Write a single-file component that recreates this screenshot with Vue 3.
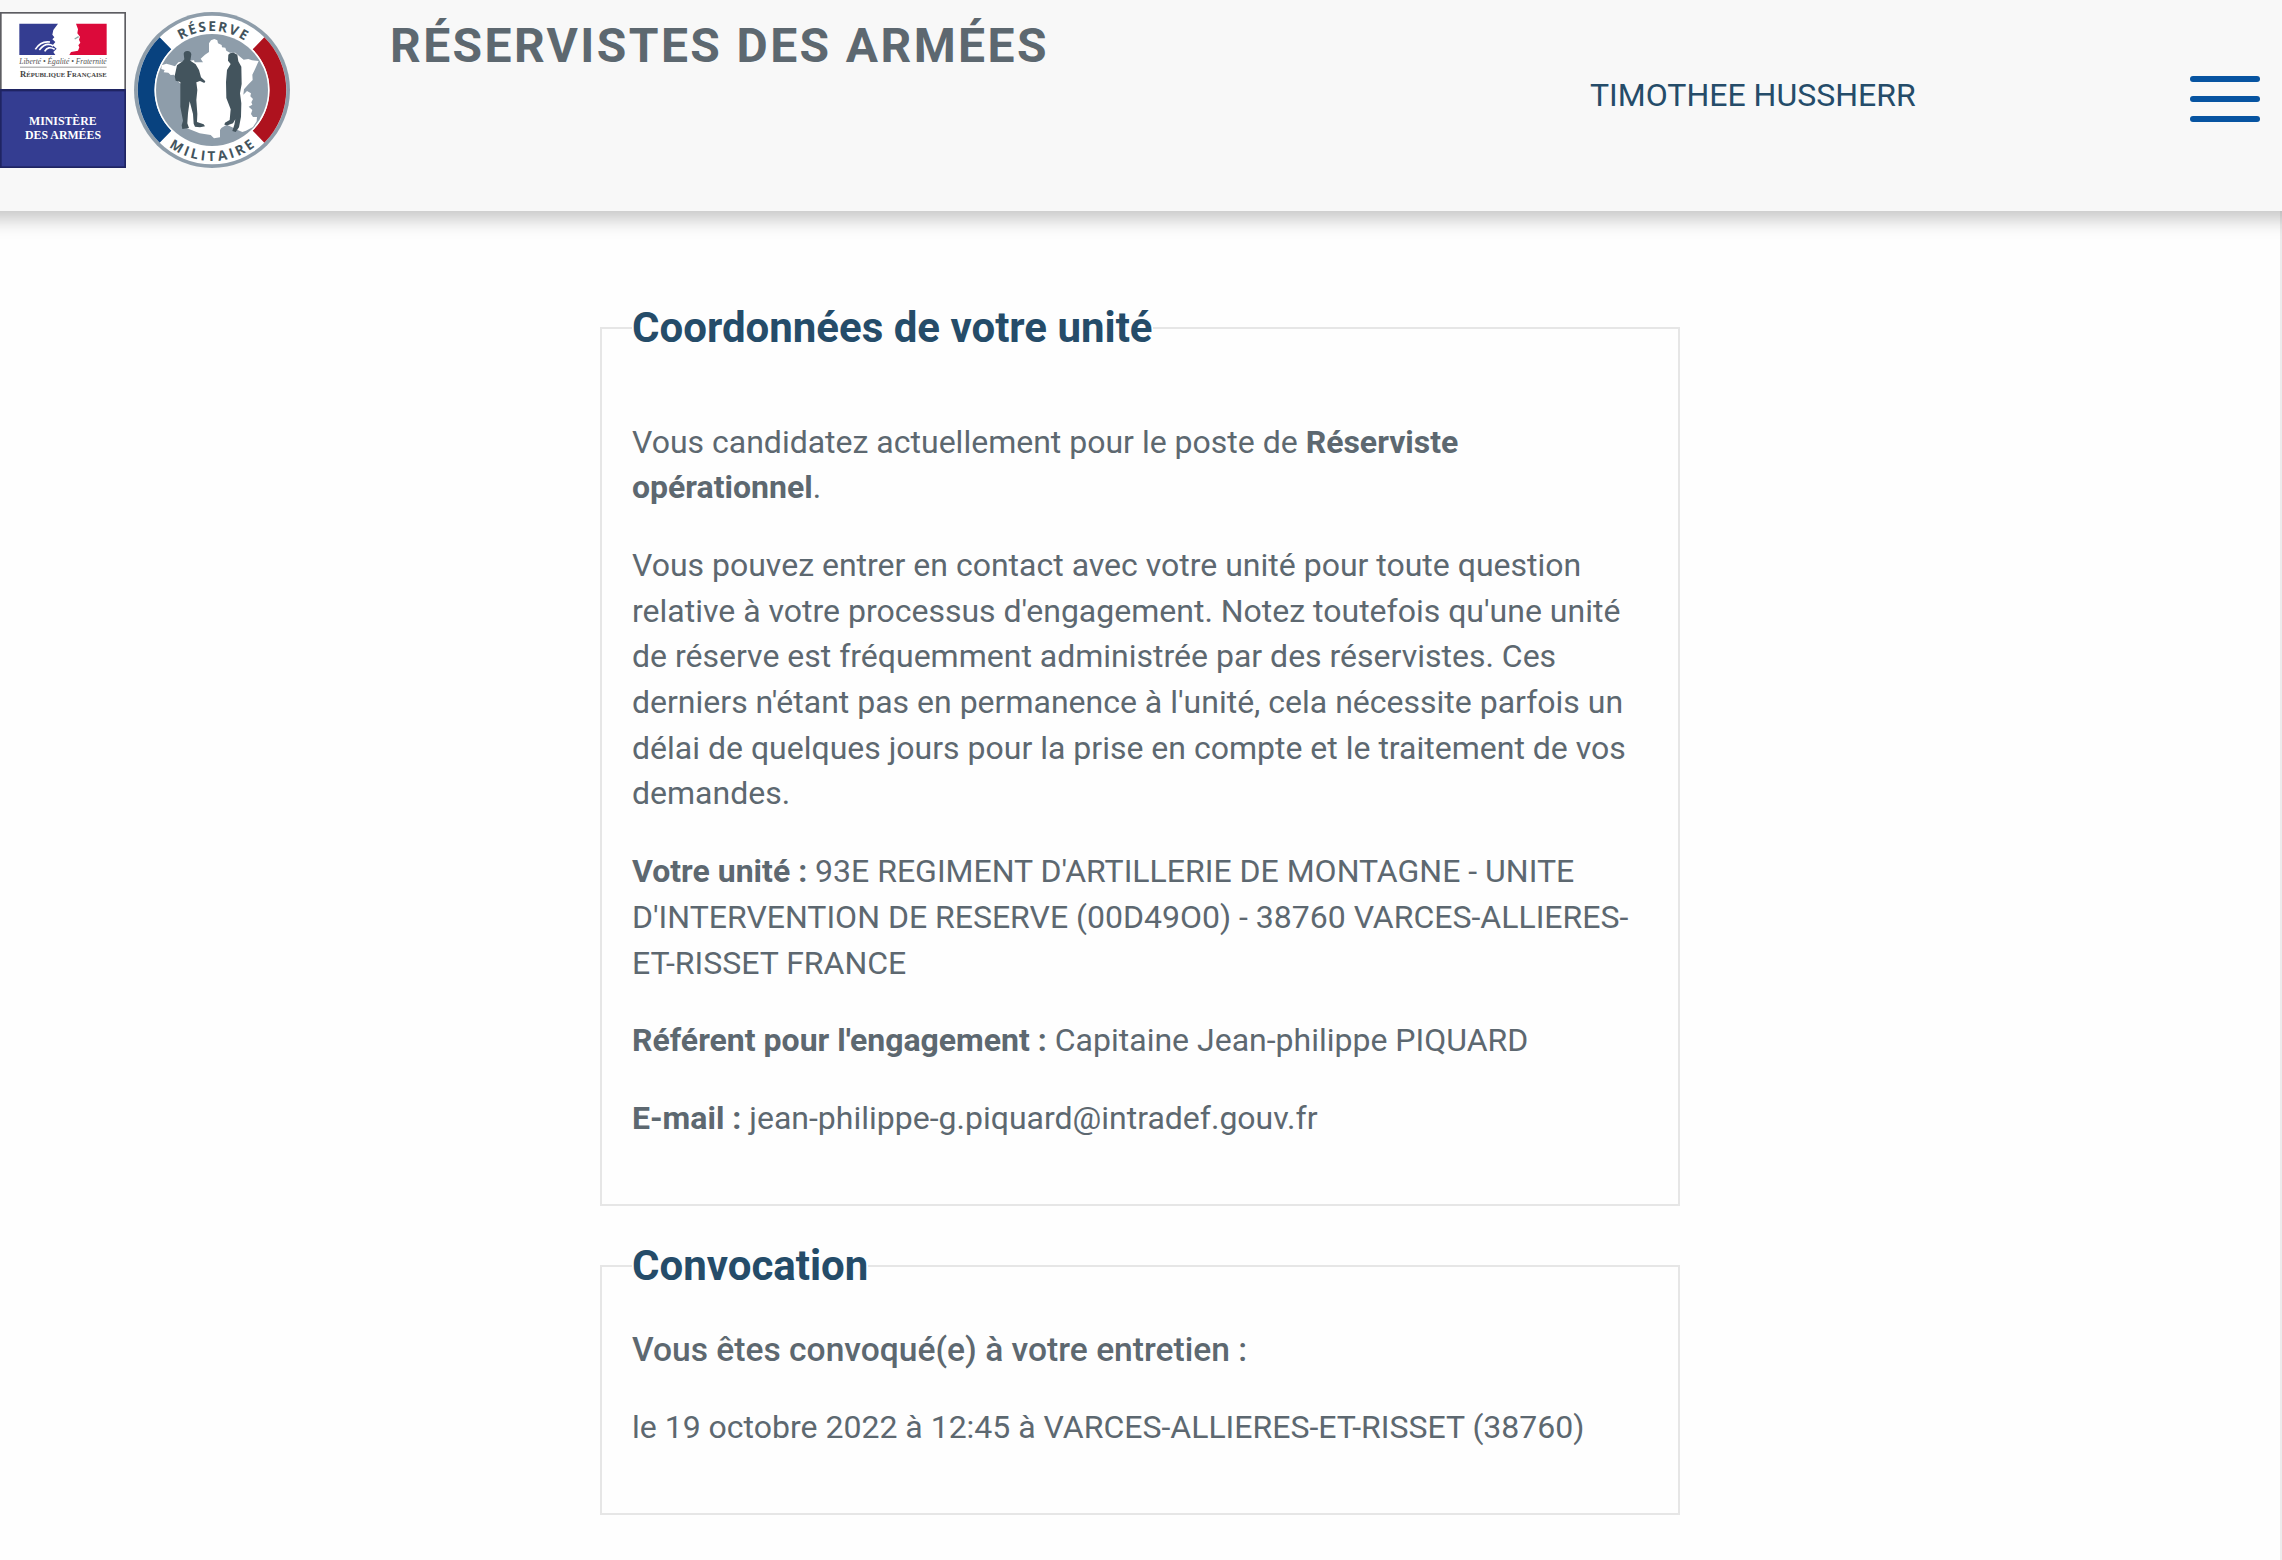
<script setup>
const user = 'TIMOTHEE HUSSHERR'
</script>

<template>
  <div class="page">
    <header class="topbar">
      <div class="logos">
        <svg class="ministry" viewBox="0 36 378 468" role="img" aria-label="Ministère des Armées">
          <rect x="0" y="36" width="378" height="468" fill="#5d5d62" />
          <rect x="5" y="41" width="368" height="226" fill="#fff" />
          <rect x="0" y="267" width="378" height="237" fill="#1f2462" />
          <rect x="5" y="274" width="368" height="225" fill="#343d91" />
          <path fill="#343d91" d="M58 71H174L160 90 157 104 163 112 157 118 166 126 158 136 170 146 160 156 166 165H58Z" />
          <path fill="#dc0a3a" d="M228 71H320V165H208L213 156 234 152 238 142 235 136 241 128 237 119 240 110 232 100 234 88Z" />
          <path fill="none" stroke="#fff" stroke-width="5" d="M106 148Q122 122 150 126M118 150Q138 124 160 138M134 154Q144 136 164 148" />
          <path fill="none" stroke="#8fa7a7" stroke-width="4" d="M224 117L236 110" />
          <text class="motto" x="58" y="191" textLength="262" lengthAdjust="spacingAndGlyphs">Liberté • Égalité • Fraternité</text>
          <rect x="60" y="200" width="260" height="3" fill="#999" />
          <text class="republic" x="60" y="230" textLength="260" lengthAdjust="spacingAndGlyphs"><tspan class="initial">R</tspan>ÉPUBLIQUE <tspan class="initial">F</tspan>RANÇAISE</text>
          <text class="dept" x="87" y="376" textLength="203" lengthAdjust="spacingAndGlyphs">MINISTÈRE</text>
          <text class="dept" x="75" y="418" textLength="228" lengthAdjust="spacingAndGlyphs">DES ARMÉES</text>
        </svg>
        <svg class="emblem" viewBox="27 36 468 468" role="img" aria-label="Réserve militaire">
          <defs>
            <path id="arc-top" d="M84 270A177 177 0 0 1 438 270" />
            <path id="arc-bottom" d="M48 270A213 213 0 0 0 474 270" />
          </defs>
          <circle cx="261" cy="270" r="234" fill="#8e9daa" />
          <circle cx="261" cy="270" r="223" fill="#fff" />
          <path fill="#08427f" d="M104 112A223 223 0 0 0 104 428L139 392A172 172 0 0 1 139 148Z" />
          <path fill="#ae121e" d="M418 112A223 223 0 0 1 418 428L383 392A172 172 0 0 0 383 148Z" />
          <circle cx="261" cy="270" r="172" fill="#fff" />
          <circle cx="261" cy="270" r="168" fill="#8e9daa" />
          <path fill="#fff" d="M268 117L277 121 279 130 290 135 291 142 301 143 304 152 315 158 331 158 345 170 356 179 370 177 381 181 401 183 390 208 382 224 383 240 371 252 357 268 355 284 366 273 378 280 376 289 384 297 379 307 382 314 371 320 382 330 378 342 384 351 396 351 395 364 384 381 363 392 352 396 338 390 320 381 305 374 289 384 285 390 285 412 267 415 257 405 238 402 224 400 190 386 177 380 182 330 178 290 180 262 160 245 147 224 137 225 130 218 116 217 119 210 109 207 110 196 124 191 138 195 150 199 160 187 190 182 207 181 209 187 234 187 227 176 240 164 252 156 252 130 258 121Z" />
          <path fill="#43545d" d="M176 161Q178 152 188 153 198 154 199 163L196 182 212 193 222 210 228 232 241 244 238 249 225 243 214 247 217 270 214 300 217 342 216 366 236 373 240 379 225 382 210 380 206 371 204 342 194 304 189 340 187 370 192 384 172 387 170 376 174 362 166 320 166 246 152 242 149 228 156 196 173 184 178 178Z" />
          <path fill="#43545d" d="M310 164Q314 157 326 158L337 164 340 184 349 200 350 252 345 280 349 310 348 350 342 382 332 396 322 393 328 374 331 358 324 370 308 376 298 374 300 368 314 360 317 328 304 294 303 246 306 210 317 192 309 182Z" />
          <text class="ring" letter-spacing="5"><textPath href="#arc-top" startOffset="50.8%" text-anchor="middle">RÉSERVE</textPath></text>
          <text class="ring" letter-spacing="9"><textPath href="#arc-bottom" startOffset="50.7%" text-anchor="middle">MILITAIRE</textPath></text>
        </svg>
      </div>
      <h1 class="title">RÉSERVISTES DES ARMÉES</h1>
      <a class="user">{{ user }}</a>
      <button class="menu" type="button" aria-label="Menu"><span /><span /><span /></button>
    </header>

    <main class="content">
      <div class="column">
        <fieldset class="card unit">
          <legend>Coordonnées de votre unité</legend>
          <p>Vous candidatez actuellement pour le poste de <strong>Réserviste opérationnel</strong>.</p>
          <p>Vous pouvez entrer en contact avec votre unité pour toute question relative à votre processus d'engagement. Notez toutefois qu'une unité de réserve est fréquemment administrée par des réservistes. Ces derniers n'étant pas en permanence à l'unité, cela nécessite parfois un délai de quelques jours pour la prise en compte et le traitement de vos demandes.</p>
          <p><strong>Votre unité :</strong> 93E REGIMENT D'ARTILLERIE DE MONTAGNE - UNITE D'INTERVENTION DE RESERVE (00D49O0) - 38760 VARCES-ALLIERES-ET-RISSET FRANCE</p>
          <p><strong>Référent pour l'engagement :</strong> Capitaine Jean-philippe PIQUARD</p>
          <p><strong>E-mail :</strong> jean-philippe-g.piquard@intradef.gouv.fr</p>
        </fieldset>

        <fieldset class="card meeting">
          <legend>Convocation</legend>
          <p class="lead">Vous êtes convoqué(e) à votre entretien :</p>
          <p>le 19 octobre 2022 à 12:45 à VARCES-ALLIERES-ET-RISSET (38760)</p>
        </fieldset>
      </div>
    </main>
  </div>
</template>

<style>
body {
  margin: 0;
  background: #fefefe;
}
</style>

<style scoped>
.page {
  display: flex;
  flex-direction: column;
  height: 1560px;
  box-sizing: border-box;
  overflow: hidden;
  font-family: Roboto, sans-serif;
  color: #5d6870;
}
/* Bleeds past both sides so the shadow stays even up to the edges */
.topbar {
  position: relative;
  display: flex;
  flex: none;
  align-items: flex-start;
  height: 211px;
  margin: 0 -40px;
  padding: 0 40px;
  background: #f8f8f8;
  box-shadow: 0 8px 18px rgba(0, 0, 0, 0.23);
}
.logos {
  display: flex;
  flex: none;
  gap: 8px;
  width: 390px;
  padding-top: 12px;
}
.ministry {
  width: 126px;
  height: 156px;
}
.emblem {
  width: 156px;
  height: 156px;
}
.motto {
  font: italic 22px "Liberation Serif", serif;
  fill: #555;
}
.republic {
  font: bold 20px "Liberation Serif", serif;
  fill: #444;
}
.initial {
  font-size: 26px;
}
.dept {
  font: bold 36px "Liberation Serif", serif;
  fill: #fff;
}
.ring {
  font: bold 41px "Open Sans", sans-serif;
  fill: #43545d;
}
.title {
  flex: none;
  margin: 18px 0 0;
  width: 1200px;
  font-size: 48px;
  line-height: 56px;
  font-weight: 700;
  letter-spacing: 2.4px;
}
.user {
  flex: none;
  width: 600px;
  margin-top: 72px;
  color: #254c69;
  font-size: 32px;
  line-height: 46px;
}
.menu {
  display: flex;
  flex: none;
  flex-direction: column;
  gap: 14px;
  width: 70px;
  margin-top: 76px;
  padding: 0;
  border: 0;
  background: none;
}
.menu span {
  height: 6px;
  border-radius: 3px;
  background: #0754a1;
}
.content {
  flex: 1;
  padding-top: 88px;
  border-right: 2px solid #ececec;
}
.column {
  width: 1080px;
  margin: 0 auto;
}
.card {
  margin: 0 0 31px;
  padding: 0 30px 30px;
  border: 2px solid #e6e6e6;
}
.unit {
  padding-top: 62.5px;
}
.meeting {
  padding-top: 32.5px;
}
legend {
  padding: 0;
  font-size: 42px;
  line-height: 58px;
  font-weight: 700;
  color: #254c69;
}
p {
  margin: 0 0 32px;
  font-size: 32px;
  line-height: 45.71px;
}
strong {
  font-weight: 700;
  line-height: 1;
}
.lead {
  font-size: 33.6px;
  font-weight: 500;
}
</style>
